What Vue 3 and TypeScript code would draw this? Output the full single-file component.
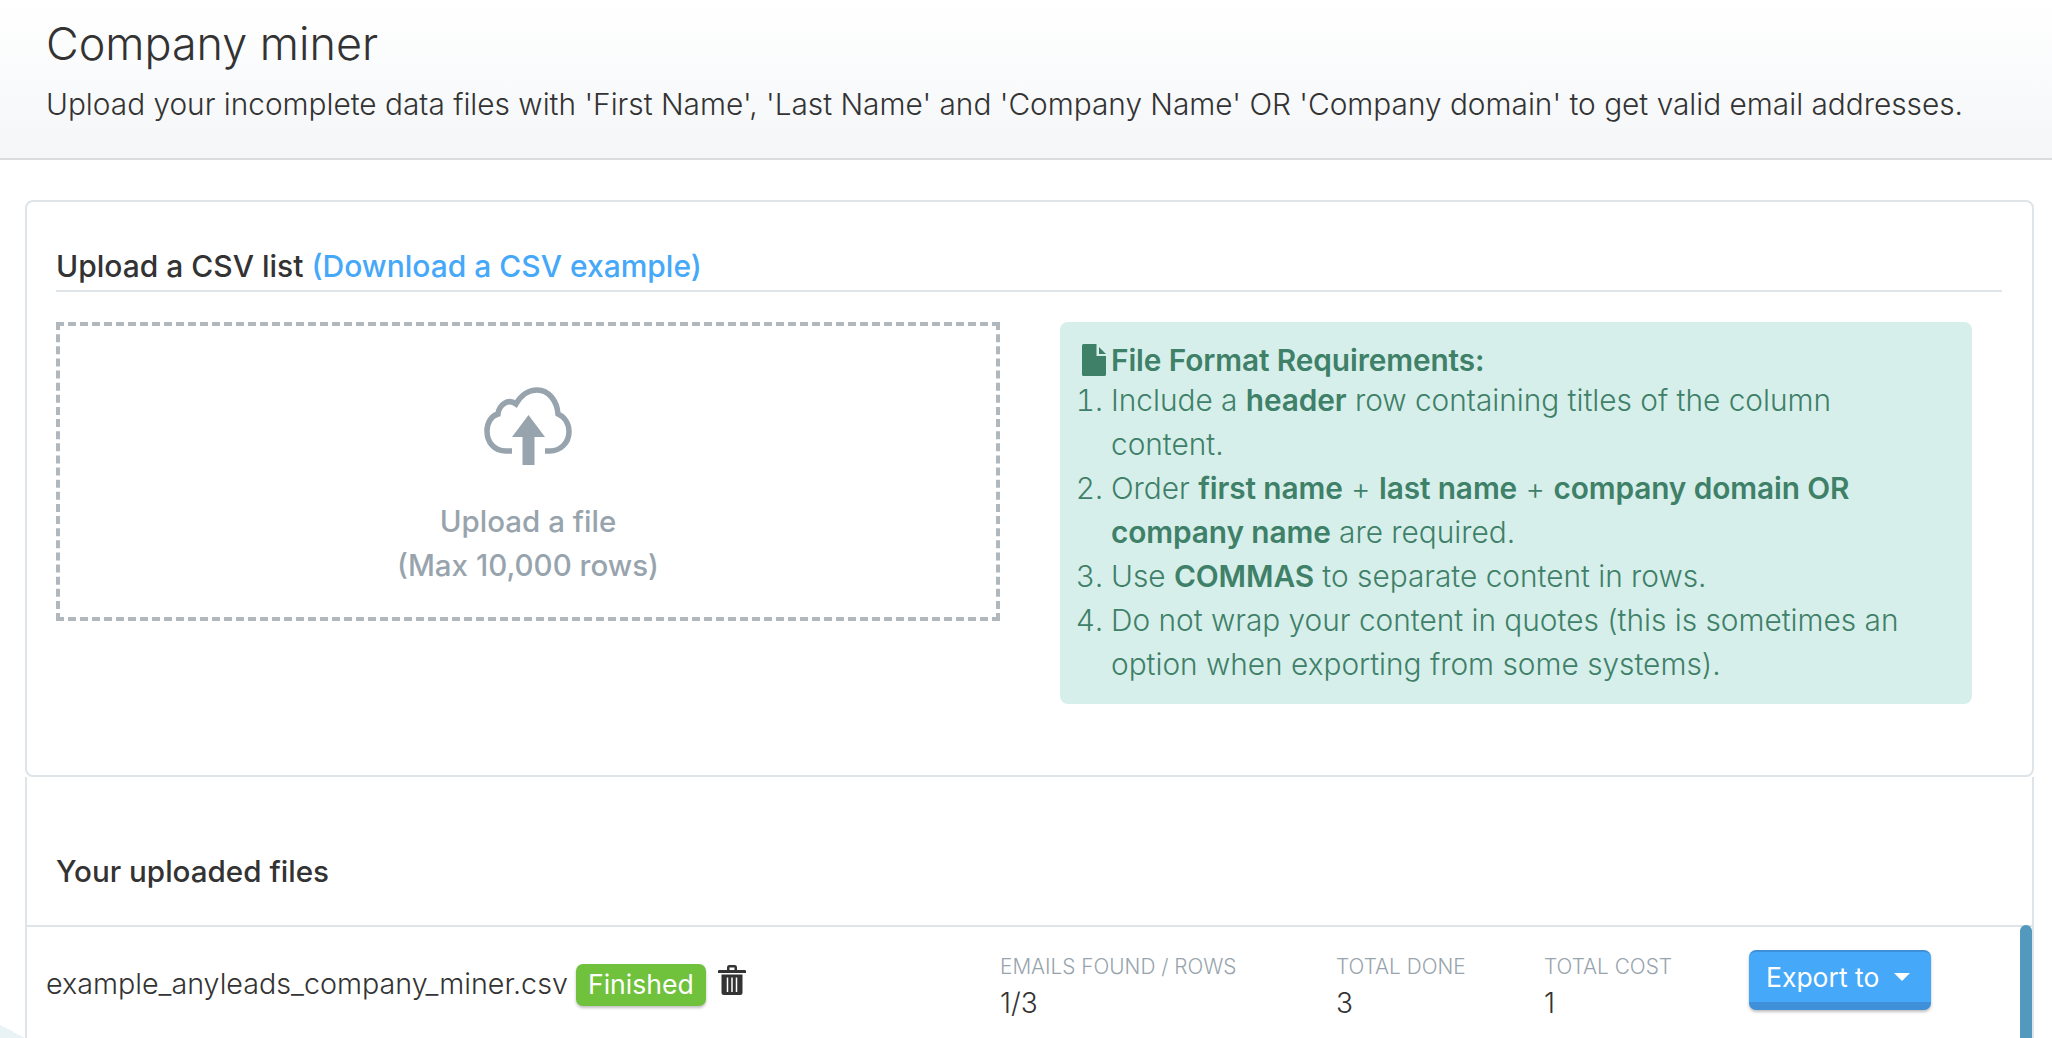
<script setup lang="ts">
const stats = [
  { label: 'EMAILS FOUND / ROWS', value: '1/3', cls: 'w1' },
  { label: 'TOTAL DONE', value: '3', cls: 'w2' },
  { label: 'TOTAL COST', value: '1', cls: 'w3' },
]
</script>

<template>
  <div class="page">
    <header class="head">
      <h1>Company miner</h1>
      <p>Upload your incomplete data files with 'First Name', 'Last Name' and 'Company Name' OR 'Company domain' to get valid email addresses.</p>
    </header>

    <main class="body">
      <section class="card">
        <h2 class="upload-title">Upload a CSV list <a>(Download a CSV example)</a></h2>
        <div class="upload-row">
          <div class="drop">
            <svg class="cloud" width="88" height="78" viewBox="0 0 88 78" fill="none">
              <path d="M28 64H22C10 64 3 55 3 44C3 36 7 29 14 27C15 18 24 11 32 17C37 8 45 3 53 3C65 3 73 14 74 27C81 30 85 37 85 45C85 56 76 64 66 64H61" stroke="#98a4ad" stroke-width="5.500" />
              <path d="M44.500 28L61 50H50.500V78H38.500V50H28Z" fill="#98a4ad" />
            </svg>
            <div class="drop-text">Upload a file<br />(Max 10,000 rows)</div>
          </div>
          <div class="req">
            <div class="req-title">
              <svg width="24" height="32" viewBox="0 0 24 32"><path d="M0 1.500A1.500 1.500 0 0 1 1.500 0H14.500V12H24V30.500A1.500 1.500 0 0 1 22.500 32H1.500A1.500 1.500 0 0 1 0 30.500Z M17 3L24 10H17Z" fill="#3f8069" /></svg>
              <b>File Format Requirements:</b>
            </div>
            <ol>
              <li>Include a <b>header</b> row containing titles of the column content.</li>
              <li>Order <b>first name</b> + <b>last name</b> + <b>company domain OR company name</b> are required.</li>
              <li>Use <b>COMMAS</b> to separate content in rows.</li>
              <li>Do not wrap your content in quotes (this is sometimes an option when exporting from some systems).</li>
            </ol>
          </div>
        </div>
      </section>

      <section class="files">
        <h2 class="files-title">Your uploaded files</h2>
        <div class="file-row">
          <div class="file-main">
            <span class="name">example_anyleads_company_miner.csv</span>
            <span class="badge">Finished</span>
            <svg class="trash" width="28" height="30" viewBox="0 0 28 30"><path d="M9 5V2.500A2.500 2.500 0 0 1 11.500 0H16.500A2.500 2.500 0 0 1 19 2.500V5H27A1 1 0 0 1 28 6V8H0V6A1 1 0 0 1 1 5ZM11.500 2.500V5H16.500V2.500Z M3.500 9.500H24.500V27.500A2.500 2.500 0 0 1 22 30H6A2.500 2.500 0 0 1 3.500 27.500Z" fill-rule="evenodd" fill="#333" /><path d="M9.500 12.500V27M14 12.500V27M18.500 12.500V27" stroke="#fff" stroke-width="1.500" /></svg>
          </div>
          <div v-for="s in stats" :key="s.label" class="stat" :class="s.cls">
            <div class="lab">{{ s.label }}</div>
            <div class="val">{{ s.value }}</div>
          </div>
          <button class="export">Export to<i class="caret"></i></button>
          <div class="scroll"></div>
        </div>
      </section>
    </main>
    <div class="corner"></div>
  </div>
</template>

<style>
html, body { margin: 0; background: #fff; }
</style>

<style scoped>
.page {
  position: relative;
  height: 1038px;
  overflow: hidden;
  font-family: "Inter", "Liberation Sans", sans-serif;
  font-weight: 300;
  color: #333;
  background: #fff;
}
.head {
  height: 158px;
  padding: 0 46px;
  border-bottom: 2px solid #dcdcdc;
  background: linear-gradient(#fff, #f4f6f8);
}
h1 { margin: 0; padding-top: 17px; font-size: 44.900px; line-height: 54px; font-weight: 300; }
.head p { margin: 0; padding-top: 15px; font-size: 29.800px; line-height: 36px; white-space: nowrap; }
.body { padding: 40px 18px 0 25px; }
.card {
  height: 577px;
  box-sizing: border-box;
  border: 2px solid #dfe4e8;
  border-radius: 8px;
  padding: 45px 30px 0 29px;
}
.upload-title {
  margin: 0;
  height: 43px;
  font-size: 30px;
  line-height: 38px;
  font-weight: 500;
  border-bottom: 2px solid #dfe4e8;
}
.upload-title a { color: #45a8f8; }
.upload-row { display: flex; padding-top: 30px; }
.drop {
  width: 944px;
  height: 299px;
  box-sizing: border-box;
  border: 4px dashed #b0b8be;
  display: flex;
  flex-direction: column;
  align-items: center;
  padding-top: 61px;
  color: #98a4ad;
  font-weight: 500;
}
.cloud { display: block; }
.drop-text { margin-top: 34px; font-size: 29.500px; line-height: 44px; text-align: center; }
.req {
  width: 912px;
  height: 382px;
  box-sizing: border-box;
  margin-left: 60px;
  background: #d7efea;
  border-radius: 8px;
  padding: 16px 48px 0 22px;
  color: #3f8069;
  font-size: 29.800px;
  line-height: 44px;
}
.req-title { display: flex; align-items: center; gap: 5px; height: 44px; }
.req b { font-weight: 600; letter-spacing: -.1px; }
ol { margin: -4px 0 0; padding: 0 0 0 29px; }
.files {
  border-left: 2px solid #dfe4e8;
  border-right: 2px solid #dfe4e8;
}
.files-title {
  margin: 0;
  height: 150px;
  box-sizing: border-box;
  padding: 75px 0 0 29px;
  font-size: 29.600px;
  line-height: 38px;
  font-weight: 500;
  border-bottom: 2px solid #dfe4e8;
}
.file-row {
  position: relative;
  display: flex;
  align-items: flex-start;
  height: 120px;
  padding: 27px 0 0 19px;
}
.file-main {
  flex: 0 0 954px;
  display: flex;
  align-items: flex-start;
}
.name { font-size: 28.700px; line-height: 36px; margin-top: 12px; white-space: nowrap; }
.badge {
  margin: 10px 0 0 8px;
  height: 42px;
  width: 130px;
  text-align: center;
  background: #70c13c;
  color: #fff;
  border-radius: 7px;
  font-size: 26.600px;
  font-weight: 400;
  line-height: 40px;
  box-shadow: 0 2px 3px rgba(0, 0, 0, .25);
}
.trash { margin: 11px 0 0 12px; }
.stat { font-size: 20.800px; }
.w1 { width: 336px; }
.w2 { width: 208px; }
.w3 { width: 205px; }
.lab { color: #98a4ad; line-height: 26px; white-space: nowrap; }
.val { font-size: 28px; line-height: 40px; margin-top: 3px; }
.export {
  display: flex;
  align-items: center;
  height: 60px;
  width: 182px;
  box-sizing: border-box;
  padding: 0 0 0 17px;
  border: 0;
  border-bottom: 8px solid #3f90d8;
  border-top: 2px solid #3f90d8;
  border-radius: 7px;
  background: #45a8f8;
  color: #fff;
  font: inherit;
  font-size: 26.500px;
  font-weight: 400;
  margin-top: -4px;
  box-shadow: 0 2px 3px rgba(0, 0, 0, .25);
}
.caret {
  display: block;
  margin-left: 15px;
  border: 8px solid transparent;
  border-top: 8px solid #fff;
  border-bottom: 0;
}
.scroll {
  position: absolute;
  right: 0;
  top: -2px;
  bottom: 0;
  width: 12px;
  background: #5299bd;
  border-radius: 6px 6px 0 0;
}
.corner {
  position: absolute;
  left: 0;
  bottom: 0;
  width: 25px;
  height: 13px;
  background: linear-gradient(to top right, #e9f3f6 50%, transparent 50%);
}
</style>
